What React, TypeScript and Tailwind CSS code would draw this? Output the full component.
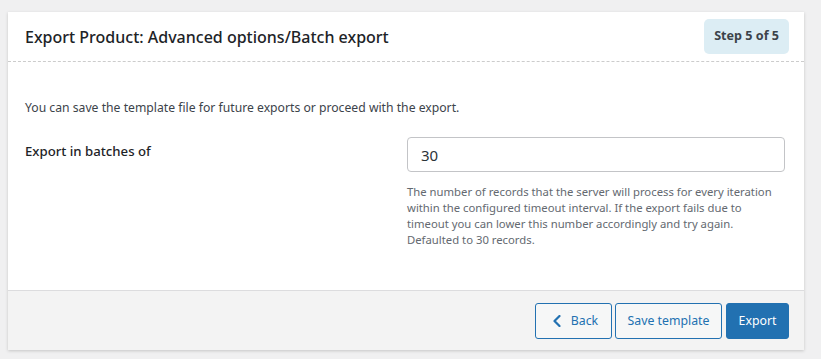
export default function App() {
  return (
    <div
      className="min-h-[359px] bg-[#f0f0f1] pt-3 pl-2 pr-[17px]"
      style={{ fontFamily: '"Noto Sans", "Open Sans", sans-serif' }}
    >
      <div className="bg-white shadow-[0_1px_3px_rgba(0,0,0,0.18)]">
        <div className="flex h-[50px] items-center justify-between border-b border-dashed border-[#cccccc] pl-[17px] pr-[15px]">
          <h2 className="text-[16px] font-medium text-[#1d2327]">
            Export Product: Advanced options/Batch export
          </h2>
          <span className="flex h-[35px] items-center rounded-[5px] bg-[#dcedf4] px-[10px] text-[12.6px] font-bold text-[#3c434a]">
            Step 5 of 5
          </span>
        </div>

        <div className="px-[17px] pb-[42px] pt-[37px]">
          <p className="text-[12.2px] text-[#3c434a]">
            You can save the template file for future exports or proceed with the export.
          </p>

          <div className="mt-[20px] flex">
            <label className="w-[382px] pt-[5px] text-[13.2px] font-medium text-[#1d2327]">
              Export in batches of
            </label>
            <div className="w-[378px]">
              <input
                type="text"
                defaultValue="30"
                className="h-[35px] w-full rounded-[4px] border border-[#c3c4c7] px-[13px] text-[15px] text-[#2c3338] outline-none"
              />
              <p className="mt-[12px] pr-[4px] text-[11.3px] leading-[16px] text-[#646970]">
                The number of records that the server will process for every iteration within the
                configured timeout interval. If the export fails due to timeout you can lower this
                number accordingly and try again. Defaulted to 30 records.
              </p>
            </div>
          </div>
        </div>

        <div className="flex h-[60px] items-center justify-end gap-[3px] border-t border-[#dcdcde] bg-[#f3f3f3] pr-[15px]">
          <button className="flex h-[36px] w-[77px] items-center justify-center gap-[10px] rounded-[3px] border border-[#2271b1] bg-[#f6f7f7] pl-[4px] text-[12.3px] text-[#2271b1]">
            <svg width="8" height="12" viewBox="0 0 8 12" fill="none">
              <polyline
                points="6.5,1 1.5,6 6.5,11"
                stroke="#2271b1"
                strokeWidth="2.2"
                strokeLinecap="round"
                strokeLinejoin="round"
              />
            </svg>
            Back
          </button>
          <button className="h-[36px] w-[107px] rounded-[3px] border border-[#2271b1] bg-[#f6f7f7] text-[12.3px] text-[#2271b1]">
            Save template
          </button>
          <button className="ml-[1px] h-[36px] w-[63px] rounded-[3px] border border-[#2271b1] bg-[#2271b1] text-[12.3px] text-white">
            Export
          </button>
        </div>
      </div>
    </div>
  );
}
